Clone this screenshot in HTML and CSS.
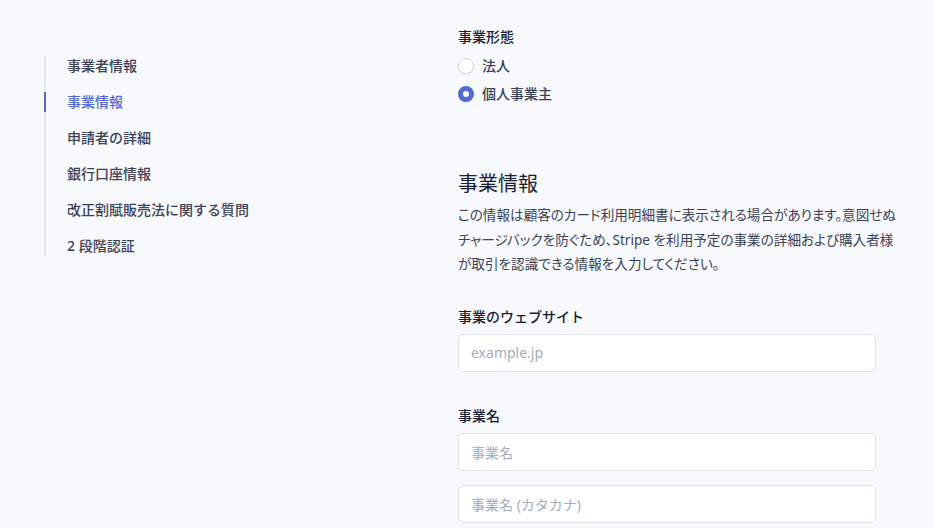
FILE: index.html
```html
<!DOCTYPE html>
<html lang="ja">
  <head>
    <meta charset="UTF-8" />
    <meta name="viewport" content="width=device-width, initial-scale=1.0" />
    <title>事業情報</title>
    <link rel="stylesheet" href="styles.css">
  </head>
  <body>
    <div class="page">
      <nav class="side">
        <ul>
          <li>事業者情報</li>
          <li class="active">事業情報</li>
          <li>申請者の詳細</li>
          <li>銀行口座情報</li>
          <li>改正割賦販売法に関する質問</li>
          <li>2 段階認証</li>
        </ul>
      </nav>
      <div class="main">
        <div class="field-title">事業形態</div>
        <div class="radios">
          <label class="radio"><span class="dot"></span>法人</label>
          <label class="radio checked"><span class="dot"></span>個人事業主</label>
        </div>
        <h2>事業情報</h2>
        <p class="desc">この情報は顧客のカード利用明細書に表示される場合があります。意図せぬ<br>チャージバックを防ぐため、Stripe を利用予定の事業の詳細および購入者様<br>が取引を認識できる情報を入力してください。</p>
        <div class="label">事業のウェブサイト</div>
        <div class="input"><span class="ph">example.jp</span></div>
        <div class="label second">事業名</div>
        <div class="input"><span class="ph">事業名</span></div>
        <div class="input"><span class="ph">事業名 (カタカナ)</span></div>
      </div>
    </div>
  </body>
</html>
```

FILE: styles.css
```css
* {
  margin: 0;
  padding: 0;
  box-sizing: border-box;
}
body {
  background: #f7f9fc;
  font-family: "Noto Sans", "Noto Sans CJK JP", sans-serif;
  color: #1a1f36;
  font-size: 14px;
}
.page {
  display: flex;
  height: 528px;
  overflow: hidden;
}
.side {
  width: 458px;
  padding: 56px 0 0 44px;
  flex-shrink: 0;
}
.side ul {
  list-style: none;
  border-left: 2px solid #e3e8ee;
  display: flex;
  flex-direction: column;
  gap: 16px;
}
.side li {
  position: relative;
  line-height: 20px;
  padding-left: 21px;
  font-weight: 500;
  color: #3c4257;
}
.side li.active {
  color: #5469d4;
}
.side li.active::before {
  content: "";
  position: absolute;
  left: -2px;
  top: 0;
  width: 2px;
  height: 20px;
  background: #5469d4;
}
.main {
  width: 418px;
  padding-top: 27px;
}
.field-title {
  line-height: 20px;
  font-weight: 500;
}
.radios {
  display: flex;
  flex-direction: column;
  gap: 8px;
  margin-top: 9px;
}
.radio {
  display: flex;
  align-items: center;
  gap: 8px;
  line-height: 20px;
  font-weight: 500;
  color: #3c4257;
}
.dot {
  width: 16px;
  height: 16px;
  border-radius: 50%;
  background: #fff;
  border: 1px solid #d5dbe1;
  box-shadow: 0 1px 1px rgba(0, 0, 0, 0.06);
}
.checked .dot {
  border: 5px solid #5469d4;
  background: #fff;
}
h2 {
  margin-top: 66px;
  font-size: 20px;
  font-weight: 400;
  line-height: 28px;
  color: #1a1f36;
}
.desc {
  margin-top: 5px;
  line-height: 24.5px;
  color: #3c4257;
  font-size: 13.6px;
  font-feature-settings: "palt";
  white-space: nowrap;
}
.label {
  margin-top: 30px;
  line-height: 20px;
  font-weight: 500;
}
.label.second {
  margin-top: 34px;
}
.input {
  margin-top: 7px;
  height: 38px;
  background: #fff;
  border: 1px solid #dfe3e8;
  border-radius: 5px;
  padding: 0 12px;
  display: flex;
  align-items: center;
}
.input + .input {
  margin-top: 14px;
}
.ph {
  color: #a3acb9;
}
```
